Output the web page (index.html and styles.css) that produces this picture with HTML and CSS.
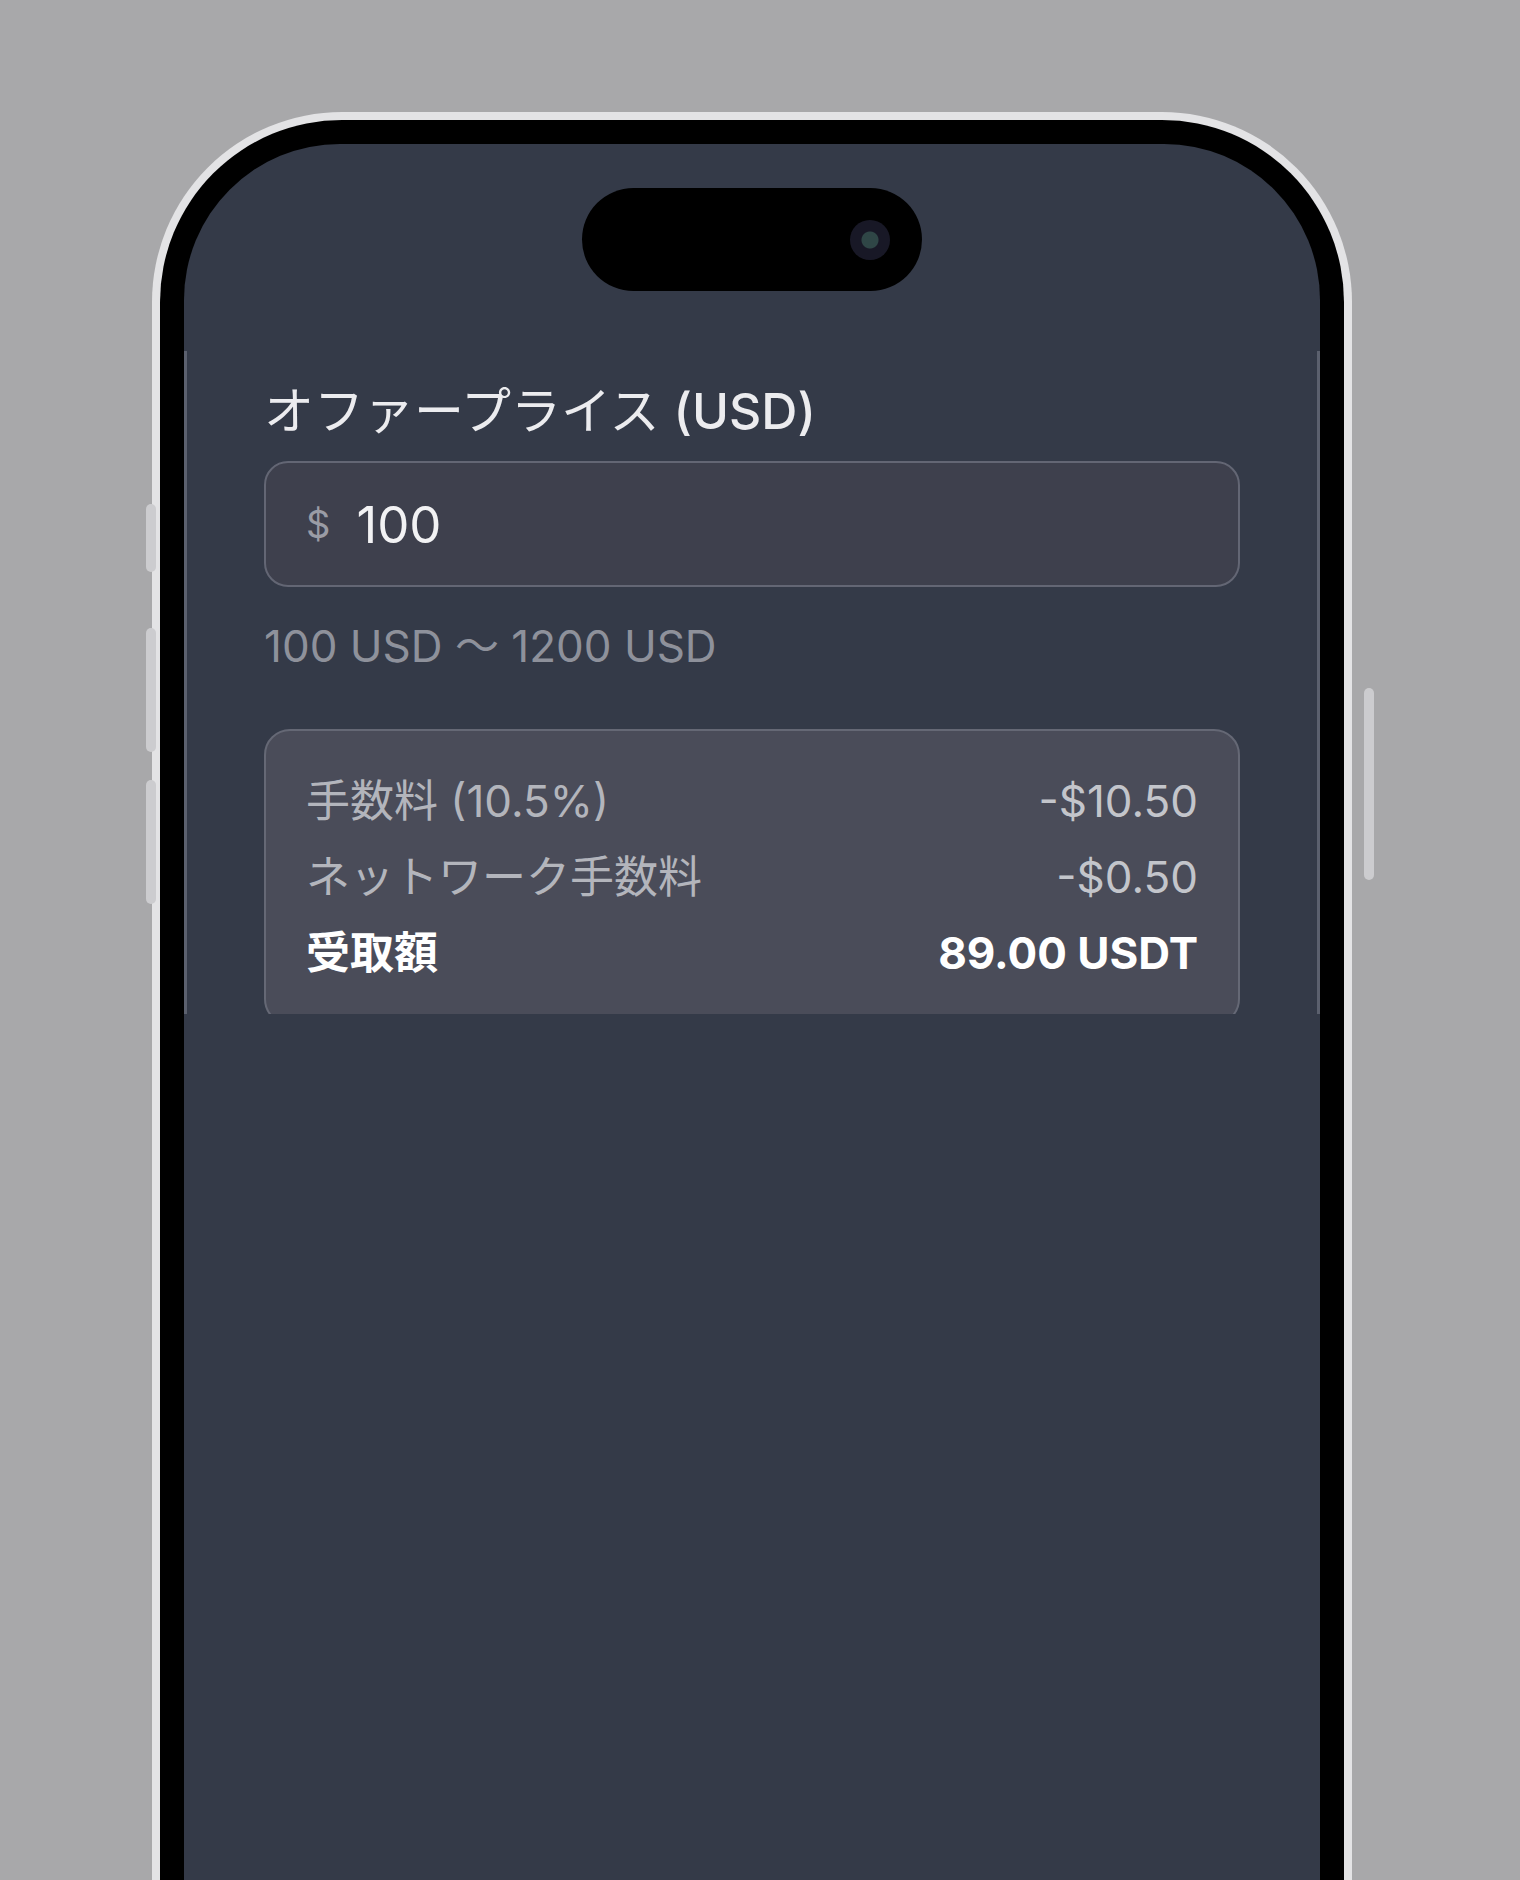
FILE: index.html
```html
<!DOCTYPE html>
<html lang="ja">
<head>
    <meta charset="UTF-8">
    <meta name="viewport" content="width=device-width, initial-scale=1.0">
    <title>オファープライス</title>
    <link rel="stylesheet" href="styles.css">
</head>
<body>
    <div class="device">
        <span class="side-btn btn-action"></span>
        <span class="side-btn btn-vol-up"></span>
        <span class="side-btn btn-vol-down"></span>
        <span class="side-btn btn-power"></span>

        <div class="phone">
            <div class="bezel">
                <div class="screen">
                    <div class="island">
                        <span class="camera"></span>
                    </div>

                    <div class="sheet">
                        <label class="field-label" for="price">オファープライス <span class="unit">(USD)</span></label>
                        <div class="price-input">
                            <span class="currency">$</span>
                            <span class="price-value" id="price">100</span>
                        </div>
                        <p class="range-hint">100 USD 〜 1200 USD</p>

                        <div class="summary">
                            <div class="summary-row">
                                <span>手数料 (10.5%)</span>
                                <span class="amount">-$10.50</span>
                            </div>
                            <div class="summary-row">
                                <span>ネットワーク手数料</span>
                                <span class="amount">-$0.50</span>
                            </div>
                            <div class="summary-row total">
                                <span>受取額</span>
                                <span class="amount">89.00 USDT</span>
                            </div>
                        </div>
                    </div>
                </div>
            </div>
        </div>
    </div>
</body>
</html>
```

FILE: styles.css
```css
html, body {
    margin: 0;
    height: 100%;
}
body {
    background: #a8a8aa;
    font-family: Inter, "Noto Sans CJK JP", sans-serif;
    overflow: hidden;
    padding-top: 112px;
    box-sizing: border-box;
}

/* phone mockup */
.device {
    position: relative;
    width: 1228px;
    margin: 0 auto;
}
.phone {
    margin-left: 6px;
    width: 1200px;
    height: 1900px;
    box-sizing: border-box;
    padding: 8px;
    background: #e3e3e5;
    border-radius: 190px 190px 0 0;
}
.bezel {
    height: 100%;
    box-sizing: border-box;
    padding: 24px;
    background: #000;
    border-radius: 182px 182px 0 0;
}
.screen {
    position: relative;
    height: 100%;
    box-sizing: border-box;
    padding-top: 207px;
    background: #343a48;
    border-radius: 156px 156px 0 0;
    overflow: hidden;
}
.side-btn {
    position: absolute;
    width: 10px;
    background: #cccccf;
    border-radius: 5px;
}
.btn-action { left: 0; top: 392px; height: 68px; }
.btn-vol-up { left: 0; top: 516px; height: 124px; }
.btn-vol-down { left: 0; top: 668px; height: 124px; }
.btn-power { right: 0; top: 576px; height: 192px; }

.island {
    position: absolute;
    top: 44px;
    left: 50%;
    margin-left: -170px;
    width: 340px;
    height: 103px;
    background: #000;
    border-radius: 52px;
    display: flex;
    align-items: center;
    justify-content: flex-end;
    padding-right: 32px;
    box-sizing: border-box;
}
.camera {
    width: 40px;
    height: 40px;
    border-radius: 50%;
    background: radial-gradient(circle, #2f4646 0 8px, #181826 9px);
}

/* offer sheet */
.sheet {
    height: 663px;
    box-sizing: border-box;
    padding: 30px 77px 0;
    border-left: 3px solid #5b606e;
    border-right: 3px solid #5b606e;
    overflow: hidden;
}
.field-label {
    display: block;
    font-size: 50px;
    line-height: 60px;
    color: #ececef;
}
.field-label .unit {
    font-weight: 500;
}
.price-input {
    margin-top: 20px;
    height: 126px;
    box-sizing: border-box;
    display: flex;
    align-items: center;
    gap: 26px;
    padding: 0 40px;
    background: #3e404d;
    border: 2px solid #636674;
    border-radius: 24px;
}
.currency {
    font-size: 38px;
    color: #9a9ca5;
}
.price-value {
    font-size: 51px;
    color: #f2f2f4;
}
.range-hint {
    margin: 29px 0 0;
    font-size: 44px;
    line-height: 60px;
    color: #8e919b;
}
.summary {
    margin-top: 53px;
    padding: 32px 40px;
    background: #4a4c59;
    border: 2px solid #656875;
    border-radius: 26px;
}
.summary-row {
    display: flex;
    justify-content: space-between;
    font-size: 44px;
    line-height: 76px;
    color: #b3b5bc;
}
.summary-row .amount {
    color: #c3c5cb;
}
.summary-row.total {
    font-weight: 700;
    color: #fff;
}
.summary-row.total .amount {
    color: #fff;
}
```
